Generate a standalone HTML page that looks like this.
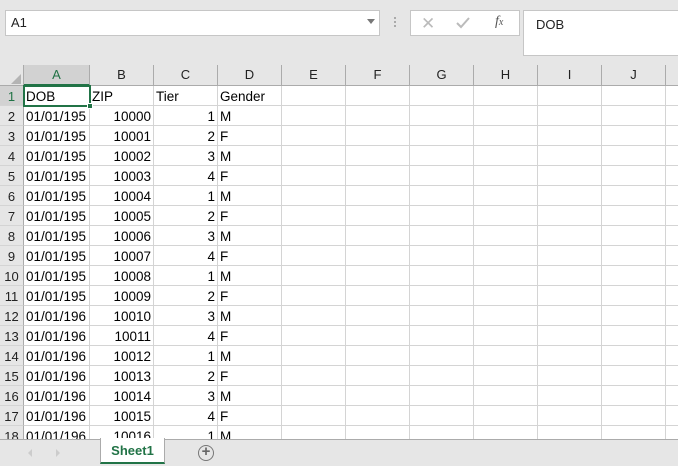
<!DOCTYPE html>
<html><head><style>
*{margin:0;padding:0;box-sizing:border-box}
body{width:678px;height:466px;overflow:hidden;background:#e6e6e6;font-family:"Liberation Sans",sans-serif;position:relative}
.abs{position:absolute}
#grid{position:absolute;left:0;top:65px;width:678px;height:374px;background:#fff;overflow:hidden}
.ch{position:absolute;top:0;height:21px;background:#e6e6e6;border-right:1px solid #ababab;border-bottom:1px solid #ababab;font-size:13px;color:#222;text-align:center;line-height:20px}
.rh{position:absolute;left:0;width:24px;height:20px;background:#e6e6e6;border-right:1px solid #ababab;border-bottom:1px solid #d4d4d4;font-size:13px;color:#222;text-align:center;line-height:21px}
.c{position:absolute;height:20px;border-right:1px solid #d4d4d4;border-bottom:1px solid #d4d4d4;font-size:13.5px;color:#000;line-height:21px;padding:0 2px;white-space:nowrap;overflow:hidden}
.r{text-align:right}
</style></head><body>
<div class="abs" style="left:5px;top:10px;width:375px;height:26px;background:#fff;border:1px solid #c6c6c6;font-size:13px;line-height:24px;padding-left:5px;color:#222">A1</div>
<div class="abs" style="left:280px;top:19px;width:0;height:0;left:367px;border-left:4px solid transparent;border-right:4px solid transparent;border-top:5px solid #777"></div>
<div class="abs" style="left:394px;top:17px;width:2px;height:2px;background:#aaa;box-shadow:0 4px #aaa,0 8px #aaa"></div>
<div class="abs" style="left:410px;top:10px;width:110px;height:26px;background:#fff;border:1px solid #c6c6c6"></div>
<div class="abs" style="left:421px;top:14px;font-size:17px;color:#bbb">✕</div>
<svg class="abs" style="left:455px;top:16px" width="16" height="14"><path d="M2 7 L6 11 L14 2" stroke="#bbb" stroke-width="2" fill="none"/></svg>
<div class="abs" style="left:495px;top:14px;font-family:'Liberation Serif',serif;font-style:italic;font-size:14px;color:#555">f<span style="font-size:10px">x</span></div>
<div class="abs" style="left:523px;top:10px;width:160px;height:46px;background:#fff;border:1px solid #c6c6c6;font-size:13px;padding:6px 0 0 12px;color:#222">DOB</div>
<div id="grid"></div>
<div class="abs" style="left:0;top:439px;width:678px;height:27px;background:#e6e6e6;border-top:1px solid #ababab"></div>
<div class="abs" style="left:28px;top:449px;border-top:4px solid transparent;border-bottom:4px solid transparent;border-right:4px solid #ccc"></div>
<div class="abs" style="left:56px;top:449px;border-top:4px solid transparent;border-bottom:4px solid transparent;border-left:4px solid #ccc"></div>
<div class="abs" style="left:100px;top:438px;width:65px;height:26px;background:#fff;border-left:1px solid #ababab;border-right:1px solid #ababab;border-bottom:2px solid #217346;color:#217346;font-weight:bold;font-size:13px;text-align:center;line-height:26px">Sheet1</div>
<div class="abs" style="left:198px;top:445px;width:16px;height:16px;border:1.5px solid #777;border-radius:50%;color:#666;font-size:15px;line-height:12px;text-align:center;font-weight:bold">+</div>
<script>
var g=document.getElementById('grid'),h='';
var cols=['A','B','C','D','E','F','G','H','I','J','K'];
var xs=[24,90,154,218,282,346,410,474,538,602,666,730];
h+='<div class="ch" style="left:0;width:24px"></div><div class="abs" style="left:11px;top:9px;border-left:10px solid transparent;border-bottom:10px solid #b4b4b4"></div>';
for(var i=0;i<cols.length;i++){var bg=i==0?'background:#d2d2d2;border-bottom:2px solid #217346;color:#217346;':'';h+='<div class="ch" style="left:'+xs[i]+'px;width:'+(xs[i+1]-xs[i])+'px;'+bg+'">'+cols[i]+'</div>';}
var gen=['M','F'];
for(var r=1;r<=18;r++){var y=21+(r-1)*20;
h+='<div class="rh" style="top:'+y+'px;'+(r==1?'background:#d2d2d2;color:#217346':'')+'">'+r+'</div>';
var v;
if(r==1)v=['DOB','ZIP','Tier','Gender'];
else{var k=r-2;v=[(k<10?'01/01/195':'01/01/196'),String(10000+k),String(k%4+1),gen[k%2]];}
for(var i=0;i<cols.length;i++){var t=i<4?v[i]:'';var cl=(r>1&&(i==1||i==2))?'c r':'c';
h+='<div class="'+cl+'" style="left:'+xs[i]+'px;top:'+y+'px;width:'+(xs[i+1]-xs[i])+'px">'+t+'</div>';}}
h+='<div class="abs" style="left:23px;top:20px;width:68px;height:22px;border:2px solid #217346"></div><div class="abs" style="left:87px;top:38px;width:6px;height:6px;background:#217346;border:1px solid #fff"></div>';
g.innerHTML=h;
</script>
</body></html>
